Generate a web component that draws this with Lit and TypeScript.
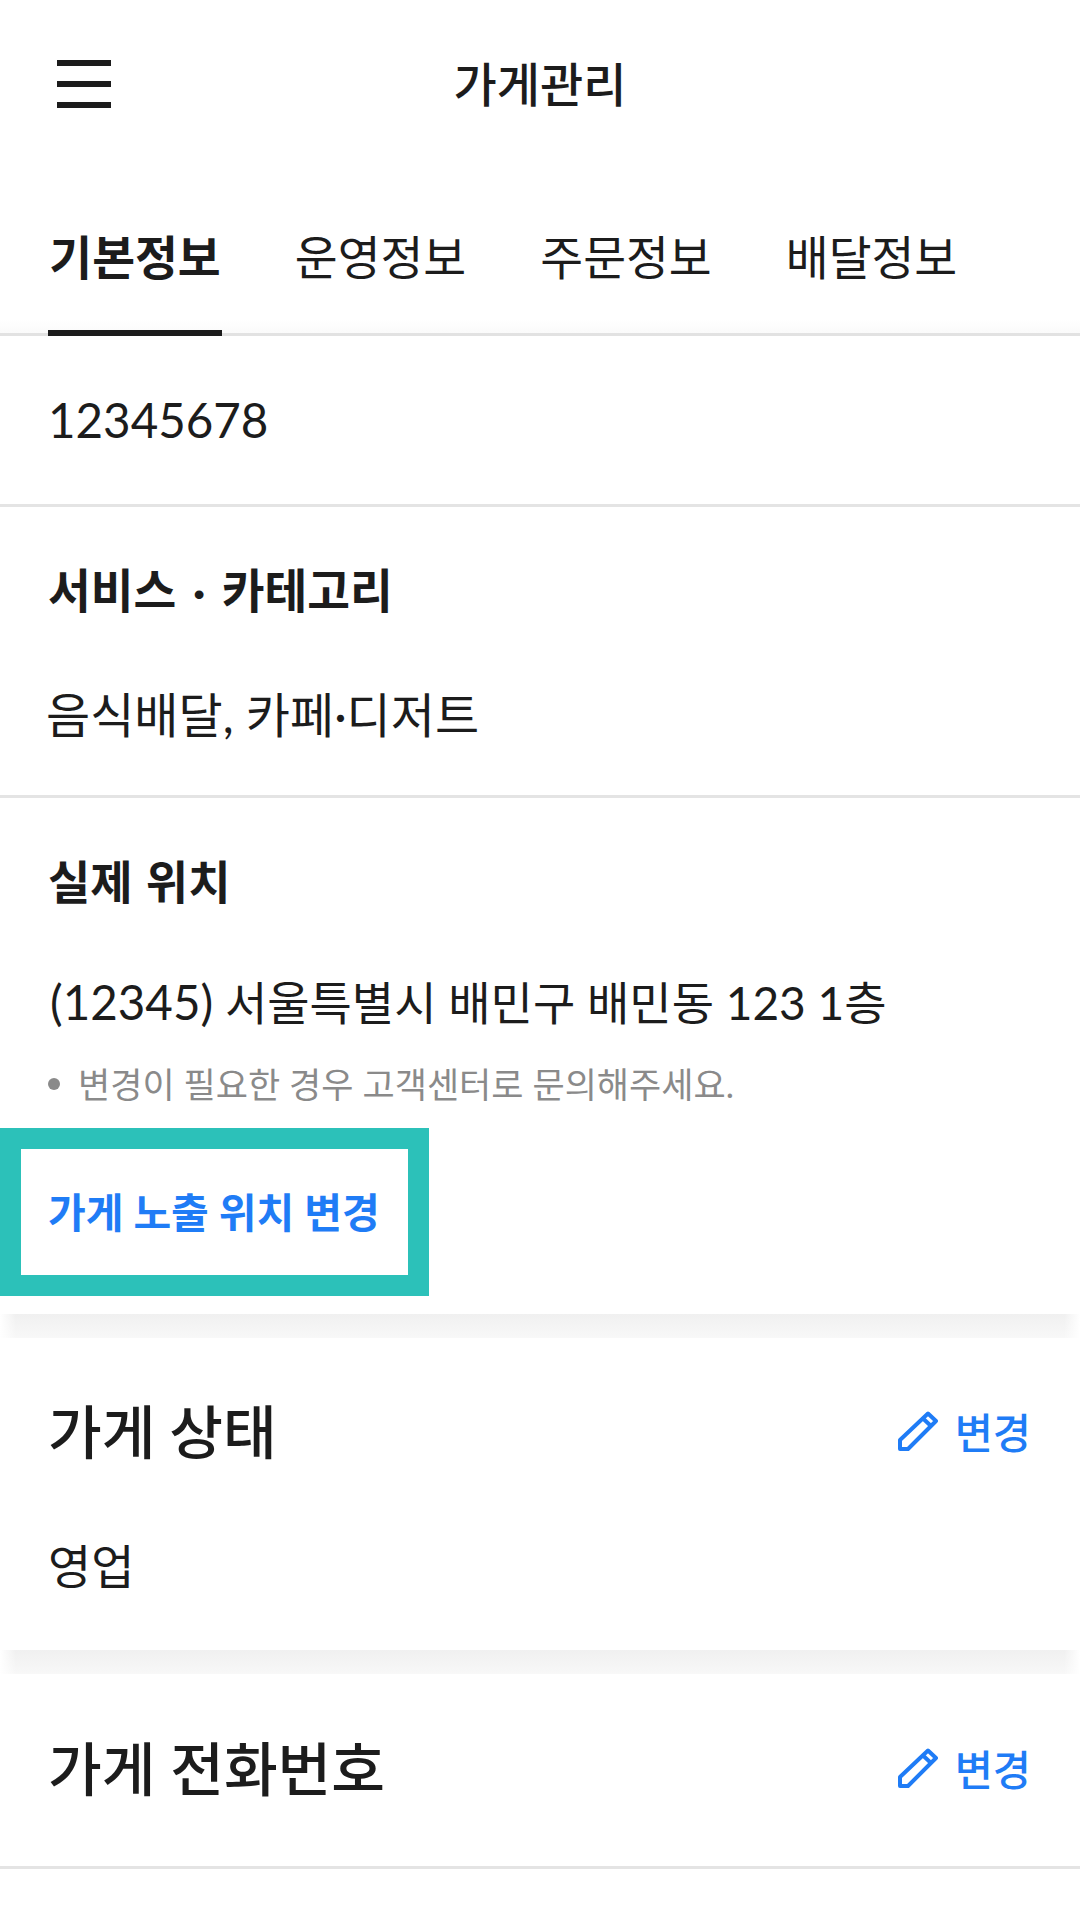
import { LitElement, html, css } from "lit";
import { customElement } from "lit/decorators.js";

@customElement("app-root")
export class AppRoot extends LitElement {
  static styles = css`
    :host {
      display: block;
      width: 1080px;
      height: 1920px;
      overflow: hidden;
      background: #fff;
      color: #1c1c1c;
      font-family: Lato, "Noto Sans CJK KR", sans-serif;
    }
    .header {
      height: 168px;
      display: flex;
      align-items: center;
      justify-content: center;
      position: relative;
    }
    .burger {
      position: absolute;
      left: 57px;
      top: 60px;
      width: 54px;
      height: 48px;
      display: flex;
      flex-direction: column;
      justify-content: space-between;
    }
    .burger i {
      display: block;
      height: 6px;
      background: #1c1c1c;
    }
    .title {
      font-size: 47px;
      font-weight: 500;
      line-height: 60px;
    }
    .tabs {
      height: 168px;
      box-sizing: border-box;
      display: flex;
      gap: 71.5px;
      padding-left: 48px;
      border-bottom: 3px solid #e2e2e2;
      background: linear-gradient(180deg, #fff calc(100% - 14px), #fafafa 100%);
    }
    .tab {
      width: 174px;
      height: 168px;
      box-sizing: border-box;
      font-size: 46.6px;
      line-height: 60px;
      padding-top: 59px;
      text-align: center;
      white-space: nowrap;
      font-weight: 400;
    }
    .tab.on {
      font-weight: 700;
      border-bottom: 6px solid #1c1c1c;
    }
    .row {
      border-bottom: 3px solid #e4e4e4;
      padding: 0 48px;
      box-sizing: border-box;
    }
    .r1 { height: 171px; padding-top: 54px; }
    .r2 { height: 291px; padding-top: 53px; }
    .r3 { height: 516px; padding-top: 54px; border-bottom: 0; }
    .value {
      font-size: 47.5px;
      line-height: 60px;
      white-space: nowrap;
    }
    .label {
      font-size: 46px;
      font-weight: 700;
      line-height: 60px;
      white-space: nowrap;
    }
    .r2 .label { font-size: 46.5px; word-spacing: 5px; }
    .r3 .label { word-spacing: 2px; }
    .r2 .value { margin: 65px 0 0 -2px; font-size: 48px; }
    .r3 .value { margin: 60px 0 0 2px; font-size: 46px; }
    .r3 .value span { font-size: 47.5px; }
    .note {
      display: flex;
      align-items: center;
      gap: 18px;
      margin-top: 31px;
      color: #8a8a8a;
      font-size: 35px;
      line-height: 40px;
      white-space: nowrap;
    }
    .note i {
      width: 12px;
      height: 12px;
      border-radius: 50%;
      background: #8a8a8a;
      flex: none;
    }
    .focus {
      margin: 24px 0 0 -48px;
      width: 429px;
      height: 168px;
      box-sizing: border-box;
      border: 21px solid #2cc1b9;
      background: #fff;
      display: flex;
      align-items: center;
      padding: 0 0 5px 27px;
      color: #1f7cf6;
      font-size: 41px;
      font-weight: 700;
      white-space: nowrap;
    }
    .band {
      height: 24px;
      background:
        linear-gradient(90deg, #fff 0, rgba(255, 255, 255, 0) 16px, rgba(255, 255, 255, 0) 1064px, #fff 100%),
        linear-gradient(180deg, #f0f0f0, #f8f8f8);
    }
    .sec {
      padding: 0 48px;
      box-sizing: border-box;
    }
    .s1 { height: 312px; padding-top: 53px; }
    .s2 { height: 195px; padding-top: 54px; border-bottom: 3px solid #e4e4e4; }
    .sec-head {
      display: flex;
      align-items: center;
      justify-content: space-between;
      height: 80px;
    }
    .sec-title {
      font-size: 58.4px;
      font-weight: 500;
      line-height: 80px;
      white-space: nowrap;
    }
    .s1 .sec-title { word-spacing: -1px; }
    .s1 .value { margin-top: 65px; font-size: 47px; }
    .edit {
      display: flex;
      align-items: center;
      gap: 17px;
      margin-right: 1px;
      color: #1f7cf6;
      font-size: 41.5px;
      font-weight: 500;
      white-space: nowrap;
    }
    .edit svg {
      width: 40px;
      height: 40px;
      display: block;
    }
  `;

  private pencil() {
    return html`<svg viewBox="0 0 40 40" fill="none" stroke="#1f7cf6" stroke-width="4" stroke-linejoin="round">
      <path d="M2 38V29L30 2.5L38 10L10 38Z" />
      <path d="M25 7.5L33 15" />
    </svg>`;
  }

  render() {
    return html`
      <div class="header">
        <div class="burger"><i></i><i></i><i></i></div>
        <div class="title">가게관리</div>
      </div>
      <div class="tabs">
        <div class="tab on">기본정보</div>
        <div class="tab">운영정보</div>
        <div class="tab">주문정보</div>
        <div class="tab">배달정보</div>
      </div>
      <div class="row r1"><div class="value">12345678</div></div>
      <div class="row r2">
        <div class="label">서비스 · 카테고리</div>
        <div class="value">음식배달, 카페·디저트</div>
      </div>
      <div class="row r3">
        <div class="label">실제 위치</div>
        <div class="value"><span>(12345)</span> 서울특별시 배민구 배민동 123 1층</div>
        <div class="note"><i></i><span>변경이 필요한 경우 고객센터로 문의해주세요.</span></div>
        <div class="focus">가게 노출 위치 변경</div>
      </div>
      <div class="band"></div>
      <div class="sec s1">
        <div class="sec-head">
          <div class="sec-title">가게 상태</div>
          <div class="edit">${this.pencil()}<span>변경</span></div>
        </div>
        <div class="value">영업</div>
      </div>
      <div class="band"></div>
      <div class="sec s2">
        <div class="sec-head">
          <div class="sec-title">가게 전화번호</div>
          <div class="edit">${this.pencil()}<span>변경</span></div>
        </div>
      </div>
    `;
  }
}
